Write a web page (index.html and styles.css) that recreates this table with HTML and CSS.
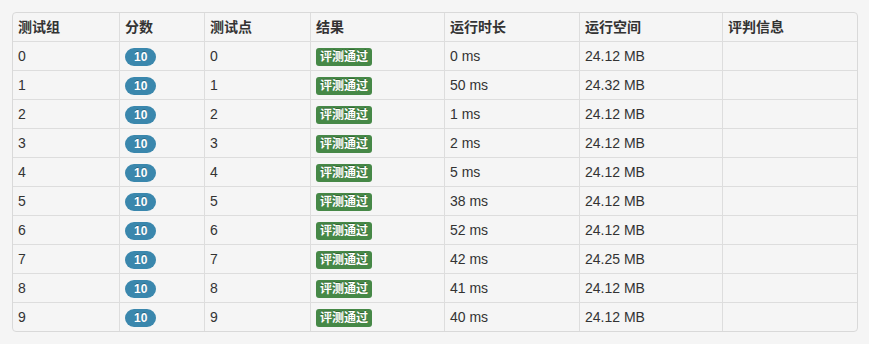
FILE: index.html
```html
<!DOCTYPE html>
<html lang="zh">
<head>
<meta charset="utf-8">
<title>测试结果</title>
<link rel="stylesheet" href="styles.css">
</head>
<body>
<div class="table-wrap">
<table class="result-table">
  <thead>
    <tr>
      <th class="c1">测试组</th>
      <th class="c2">分数</th>
      <th class="c3">测试点</th>
      <th class="c4">结果</th>
      <th class="c5">运行时长</th>
      <th class="c6">运行空间</th>
      <th class="c7">评判信息</th>
    </tr>
  </thead>
  <tbody>
    <tr><td>0</td><td><span class="badge">10</span></td><td>0</td><td><span class="label">评测通过</span></td><td>0 ms</td><td>24.12 MB</td><td></td></tr>
    <tr><td>1</td><td><span class="badge">10</span></td><td>1</td><td><span class="label">评测通过</span></td><td>50 ms</td><td>24.32 MB</td><td></td></tr>
    <tr><td>2</td><td><span class="badge">10</span></td><td>2</td><td><span class="label">评测通过</span></td><td>1 ms</td><td>24.12 MB</td><td></td></tr>
    <tr><td>3</td><td><span class="badge">10</span></td><td>3</td><td><span class="label">评测通过</span></td><td>2 ms</td><td>24.12 MB</td><td></td></tr>
    <tr><td>4</td><td><span class="badge">10</span></td><td>4</td><td><span class="label">评测通过</span></td><td>5 ms</td><td>24.12 MB</td><td></td></tr>
    <tr><td>5</td><td><span class="badge">10</span></td><td>5</td><td><span class="label">评测通过</span></td><td>38 ms</td><td>24.12 MB</td><td></td></tr>
    <tr><td>6</td><td><span class="badge">10</span></td><td>6</td><td><span class="label">评测通过</span></td><td>52 ms</td><td>24.12 MB</td><td></td></tr>
    <tr><td>7</td><td><span class="badge">10</span></td><td>7</td><td><span class="label">评测通过</span></td><td>42 ms</td><td>24.25 MB</td><td></td></tr>
    <tr><td>8</td><td><span class="badge">10</span></td><td>8</td><td><span class="label">评测通过</span></td><td>41 ms</td><td>24.12 MB</td><td></td></tr>
    <tr><td>9</td><td><span class="badge">10</span></td><td>9</td><td><span class="label">评测通过</span></td><td>40 ms</td><td>24.12 MB</td><td></td></tr>
  </tbody>
</table>
</div>
</body>
</html>
```
FILE: styles.css
```css
html, body {
  background: #f5f5f5;
}
body {
  margin: 12px 11px 12px 12px;
  font-family: "Liberation Sans", Arial, "Noto Sans CJK SC", sans-serif;
  font-size: 14px;
  line-height: 20px;
  color: #333;
}
.table-wrap {
  border: 1px solid #d9d9d9;
  border-radius: 4px;
  overflow: hidden;
}
.result-table {
  width: 100%;
  table-layout: fixed;
  border-collapse: separate;
  border-spacing: 0;
}
.result-table th,
.result-table td {
  box-sizing: border-box;
  padding: 4px 5px;
  text-align: left;
  vertical-align: top;
  border-left: 1px solid #ddd;
  border-top: 1px solid #ddd;
  height: 29px;
}
.result-table th {
  font-weight: bold;
  border-top: none;
  height: 28px;
}
.result-table th:first-child,
.result-table td:first-child {
  border-left: none;
}
.c1 { width: 106px; }
.c2 { width: 85px; }
.c3 { width: 106px; }
.c4 { width: 134px; }
.c5 { width: 135px; }
.c6 { width: 143px; }
.badge {
  display: inline-block;
  padding: 2px 9px;
  font-size: 12px;
  font-weight: bold;
  line-height: 14px;
  color: #fff;
  background: #3a87ad;
  border-radius: 9px;
  text-shadow: 0 -1px 0 rgba(0, 0, 0, 0.25);
  vertical-align: top;
  margin-top: 2px;
}
.label {
  display: inline-block;
  padding: 2px 4px;
  font-size: 12px;
  font-weight: bold;
  line-height: 14px;
  color: #fff;
  background: #468847;
  border-radius: 3px;
  text-shadow: 0 -1px 0 rgba(0, 0, 0, 0.25);
  vertical-align: top;
  margin-top: 2px;
}
```
